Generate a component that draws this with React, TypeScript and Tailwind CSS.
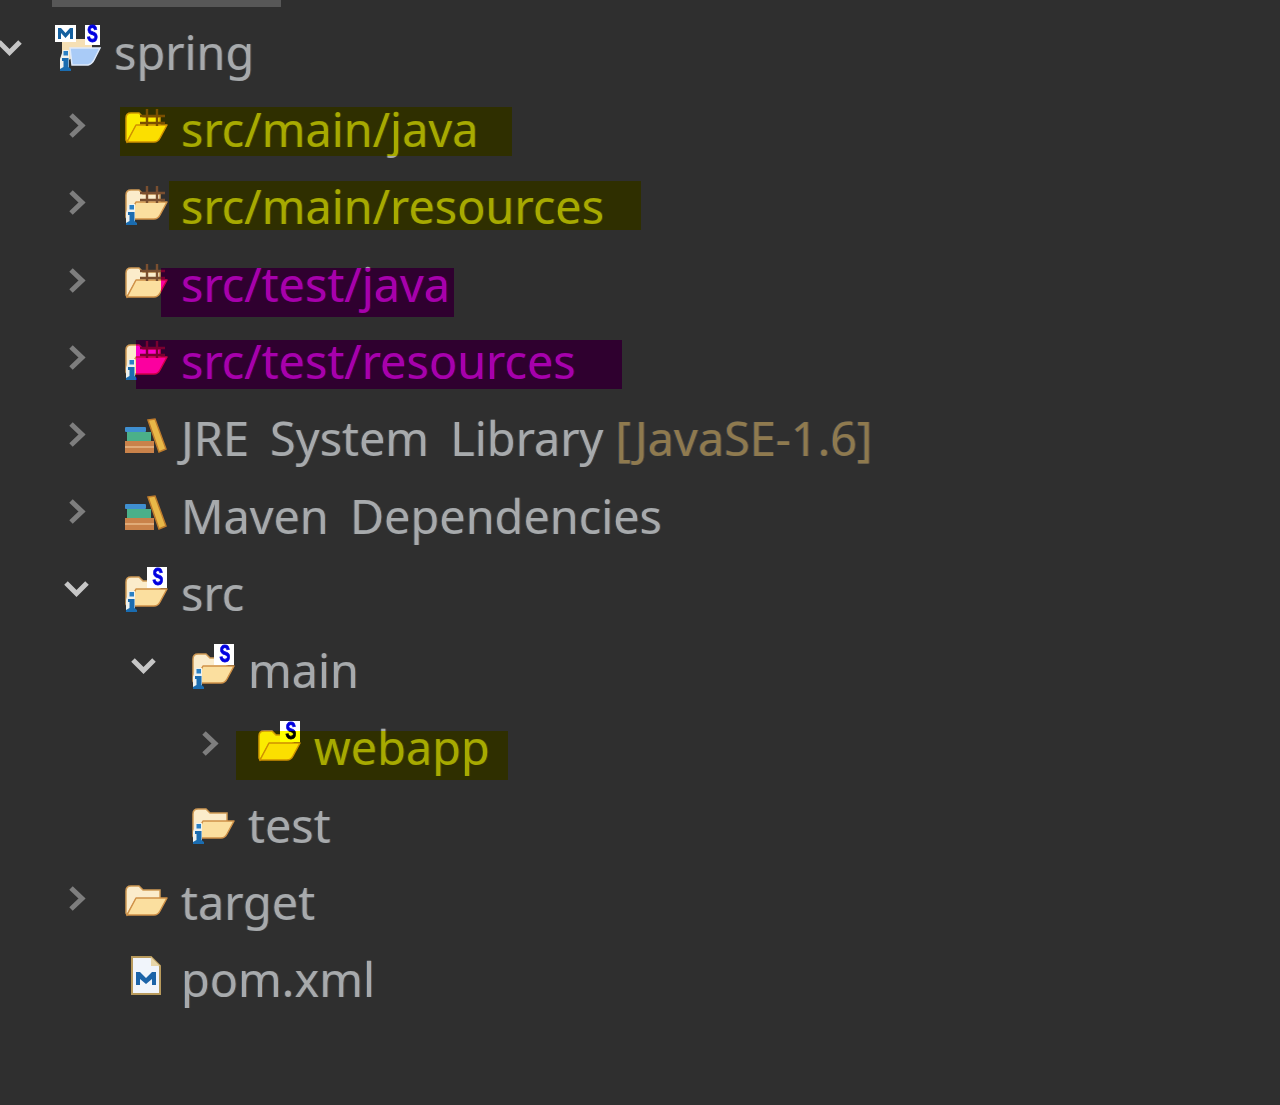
type IconProps = { kind: "folder" | "project" | "library" | "pom"; grid?: boolean; info?: boolean; s?: boolean };

function InfoMark({ x = 0 }: { x?: number }) {
  return (
    <g transform={`translate(${x} 0)`}>
      <path d="M2 42V30l3-9h6v21z" fill="#eef1ee" />
      <rect x="5.500" y="22" width="4.500" height="4.500" fill="#2a80c4" />
      <path d="M4 29h6.500v9l2.500 2v2H2v-2l3.500-2v-6H4z" fill="#1a6cb0" />
    </g>
  );
}

function SLetter({ x, y }: { x: number; y: number }) {
  return (
    <text transform={`translate(${x} ${y}) scale(.72 1)`} textAnchor="middle" fontFamily="'Liberation Mono', monospace" fontWeight="700" fontSize="25" fill="#0000e0" stroke="#0000e0" strokeWidth="0.8">
      S
    </text>
  );
}

function SBadge() {
  return (
    <g>
      <rect x="23" y="-3" width="20" height="21" fill="#ffffff" />
      <SLetter x={34} y={15} />
    </g>
  );
}

function GridMark() {
  return <path d="M23 3v17M33 3v17M16 10h25M16 17h25" stroke="#7a4f30" strokeWidth="2.400" fill="none" />;
}

function FolderIcon({ grid, info, s }: { grid?: boolean; info?: boolean; s?: boolean }) {
  return (
    <>
      <path d="M2 34V12q0-5 5-5h8l4 4h17v9H12L3 36z" fill="#fbeccb" stroke="#d09a55" strokeWidth="1.500" />
      <path d="M3 36 12 19h31l-7 13q-2 4-6 4z" fill="#fbdf9f" stroke="#cf9148" strokeWidth="1.500" strokeLinejoin="round" />
      {grid && <GridMark />}
      {info && <InfoMark />}
      {s && <SBadge />}
    </>
  );
}

function TreeIcon({ kind, grid, info, s }: IconProps) {
  return (
    <svg viewBox="0 0 57 50" className="w-[57px] h-[50px] shrink-0 overflow-visible">
      {kind === "folder" && <FolderIcon grid={grid} info={info} s={s} />}
      {kind === "project" && (
        <g>
          <path d="M5 34V10h30v10z" fill="#f5dfb4" />
          <path d="M15 36 13 19h30l-6 12q-2 4-6 5z" fill="#a9cbf7" stroke="#dfeafa" strokeWidth="1.500" />
          <rect x="-2" y="-4" width="21" height="17" fill="#ffffff" />
          <path d="M1 10V-1h3l4.500 5 4.500-5h3v11h-3V4l-4.500 5L4 4v6z" fill="#14609f" />
          <rect x="28" y="-4" width="15" height="20" fill="#ffffff" />
          <SLetter x={35.500} y={13} />
          <InfoMark x={1} />
        </g>
      )}
      {kind === "library" && (
        <g>
          <rect x="1" y="12" width="21" height="5" rx="1" fill="#3f8fd0" />
          <rect x="3" y="17" width="24" height="9" fill="#4bb089" />
          <rect x="1" y="26" width="29" height="12" fill="#c9824a" />
          <rect x="1" y="31" width="29" height="2" fill="#e0ab78" />
          <path d="M24 5l7-1 11 30-7 3z" fill="#e8b848" stroke="#bd7b2c" strokeWidth="1.500" />
        </g>
      )}
      {kind === "pom" && (
        <g>
          <path d="M8 1h19l9 9v28H8z" fill="#f1f5fb" stroke="#b89a5c" strokeWidth="2" />
          <path d="M27 1v9h9z" fill="#e8d6a8" />
          <path d="M12 29V16h4l6 6 6-6h4v13h-4v-6l-6 5-6-5v6z" fill="#1c64a8" />
        </g>
      )}
    </svg>
  );
}

function Chevron({ open }: { open?: boolean }) {
  if (open) {
    return (
      <svg viewBox="0 0 61 50" className="w-[61px] h-[50px] shrink-0 overflow-visible">
        <path d="M3 13l10.500 10.500 10.500-10.500" fill="none" stroke="#c6c6c6" strokeWidth="5" />
      </svg>
    );
  }
  return (
    <svg viewBox="0 0 61 50" className="w-[61px] h-[50px] shrink-0 overflow-visible">
      <path d="M8 9l11 10.500-11 10.500" fill="none" stroke="#7e7e7e" strokeWidth="5" />
    </svg>
  );
}

function Row({
  indent,
  chevron,
  icon,
  label,
  extra,
  mark,
}: {
  indent: string;
  chevron?: "open" | "closed";
  icon: IconProps;
  label: string;
  extra?: string;
  mark?: string;
}) {
  return (
    <div className={`relative flex items-center h-[77.3px] ${indent}`}>
      {chevron ? <Chevron open={chevron === "open"} /> : <div className="w-[61px] shrink-0" />}
      <TreeIcon {...icon} />
      <span className="whitespace-nowrap pb-[3px] text-[#a7aaac] [word-spacing:9px] [text-shadow:-1px_0_0_rgba(70,130,190,0.3),1px_0_0_rgba(190,130,80,0.3)]">
        {label}
        {extra && <span className="text-[#8f7a4e] ml-[12px]">{extra}</span>}
      </span>
      {mark && <div className={`absolute h-[49px] mix-blend-multiply ${mark}`} />}
    </div>
  );
}

export default function App() {
  return (
    <div className="w-[1280px] h-[1105px] overflow-hidden bg-[#2f2f2f] font-['Noto_Sans',sans-serif] text-[46.8px] leading-none blur-[0.6px]">
      <div className="h-[7px] w-[229px] ml-[52px] bg-[#575757]" />
      <div className="mt-[8px]">
        <Row indent="ml-[-4px]" chevron="open" icon={{ kind: "project" }} label="spring" />
        <Row indent="pl-[63px]" chevron="closed" icon={{ kind: "folder", grid: true }} label="src/main/java" mark="left-[120px] w-[392px] top-[15px] bg-[#ffff00]" />
        <Row indent="pl-[63px]" chevron="closed" icon={{ kind: "folder", grid: true, info: true }} label="src/main/resources" mark="left-[169px] w-[472px] top-[11px] bg-[#ffff00]" />
        <Row indent="pl-[63px]" chevron="closed" icon={{ kind: "folder", grid: true }} label="src/test/java" mark="left-[161px] w-[293px] top-[21px] bg-[#ff00ff]" />
        <Row indent="pl-[63px]" chevron="closed" icon={{ kind: "folder", grid: true, info: true }} label="src/test/resources" mark="left-[136px] w-[486px] top-[16px] bg-[#ff00ff]" />
        <Row indent="pl-[63px]" chevron="closed" icon={{ kind: "library" }} label="JRE System Library" extra="[JavaSE-1.6]" />
        <Row indent="pl-[63px]" chevron="closed" icon={{ kind: "library" }} label="Maven Dependencies" />
        <Row indent="pl-[63px]" chevron="open" icon={{ kind: "folder", info: true, s: true }} label="src" />
        <Row indent="pl-[130px]" chevron="open" icon={{ kind: "folder", info: true, s: true }} label="main" />
        <Row indent="pl-[196px]" chevron="closed" icon={{ kind: "folder", s: true }} label="webapp" mark="left-[236px] w-[272px] top-[20px] bg-[#ffff00]" />
        <Row indent="pl-[130px]" icon={{ kind: "folder", info: true }} label="test" />
        <Row indent="pl-[63px]" chevron="closed" icon={{ kind: "folder" }} label="target" />
        <Row indent="pl-[63px]" icon={{ kind: "pom" }} label="pom.xml" />
      </div>
    </div>
  );
}
